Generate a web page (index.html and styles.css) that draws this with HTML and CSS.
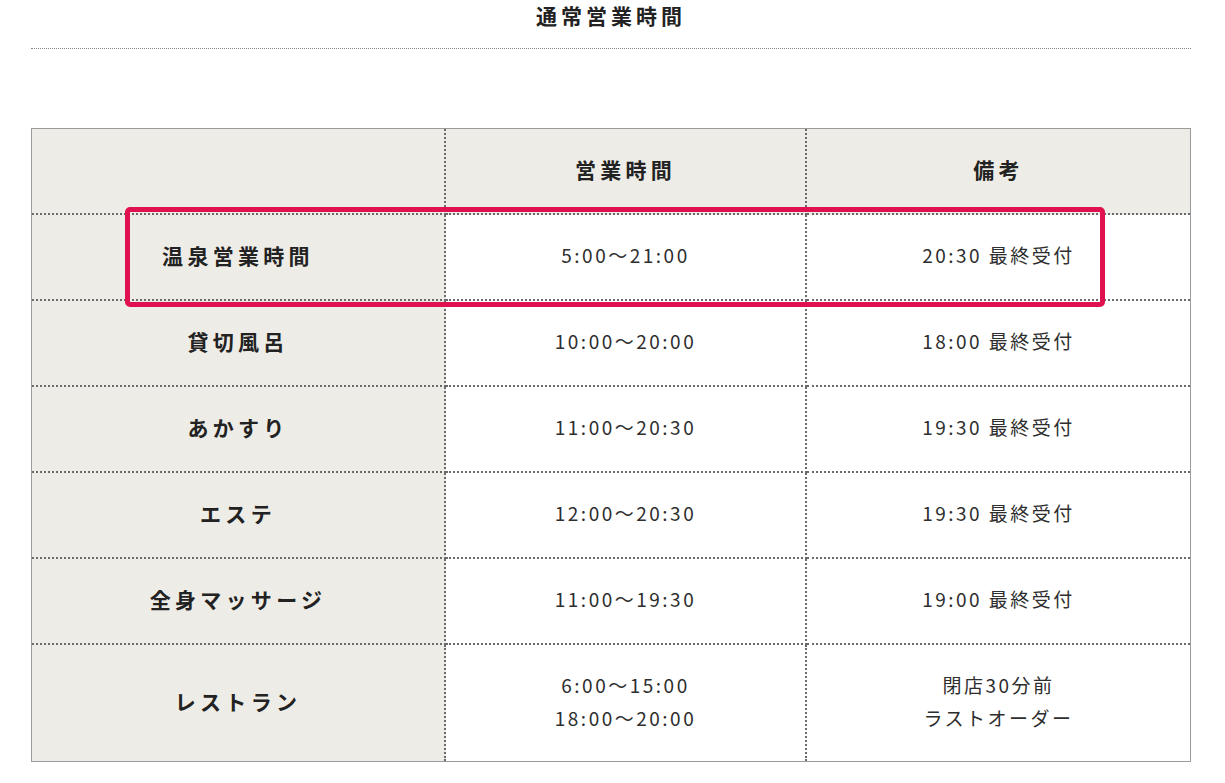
FILE: index.html
```html
<!DOCTYPE html>
<html lang="ja">
<head>
<meta charset="utf-8">
<title>通常営業時間</title>
<link rel="stylesheet" href="styles.css">
</head>
<body>
<div class="page">
  <h2 class="title">通常営業時間</h2>
  <div class="rule"></div>
  <div class="table-wrap">
    <table class="hours">
      <colgroup>
        <col class="col-label">
        <col class="col-time">
        <col class="col-note">
      </colgroup>
      <thead>
        <tr class="head-row">
          <th class="label"></th>
          <th>営業時間</th>
          <th>備考</th>
        </tr>
      </thead>
      <tbody>
        <tr>
          <th class="label">温泉営業時間</th>
          <td>5:00～21:00</td>
          <td>20:30 最終受付</td>
        </tr>
        <tr>
          <th class="label">貸切風呂</th>
          <td>10:00～20:00</td>
          <td>18:00 最終受付</td>
        </tr>
        <tr>
          <th class="label">あかすり</th>
          <td>11:00～20:30</td>
          <td>19:30 最終受付</td>
        </tr>
        <tr>
          <th class="label">エステ</th>
          <td>12:00～20:30</td>
          <td>19:30 最終受付</td>
        </tr>
        <tr>
          <th class="label">全身マッサージ</th>
          <td>11:00～19:30</td>
          <td>19:00 最終受付</td>
        </tr>
        <tr class="tall">
          <th class="label">レストラン</th>
          <td>6:00～15:00<br>18:00～20:00</td>
          <td>閉店30分前<br>ラストオーダー</td>
        </tr>
      </tbody>
    </table>
    <div class="highlight"></div>
  </div>
</div>
</body>
</html>
```

FILE: styles.css
```css
html, body {
  margin: 0;
  padding: 0;
  background: #ffffff;
}

body {
  font-family: "Noto Sans CJK JP", "Noto Sans", sans-serif;
  color: #333333;
}

.page {
  width: 1160px;
  margin-left: 31px;
}

.title {
  margin: 0;
  padding-top: 1px;
  text-align: center;
  font-size: 21px;
  font-weight: 700;
  letter-spacing: 4px;
  line-height: 28px;
  color: #222222;
}

.rule {
  margin-top: 19px;
  border-top: 1px dotted #888888;
}

.table-wrap {
  position: relative;
  margin-top: 79px;
}

.hours {
  width: 1160px;
  border-collapse: separate;
  border-spacing: 0;
  table-layout: fixed;
  border: 1px solid #9a9a9a;
}

.col-label {
  width: 414px;
}

.col-time {
  width: 361px;
}

.hours th,
.hours td {
  border: 0;
  border-right: 2px dotted #6a6a6a;
  border-bottom: 2px dotted #6a6a6a;
  text-align: center;
  vertical-align: middle;
  padding: 0 0 5px 0;
}

.hours tr > :last-child {
  border-right: 0;
}

.hours tbody tr:last-child > * {
  border-bottom: 0;
}

.hours th {
  font-size: 21px;
  font-weight: 700;
  letter-spacing: 4.3px;
  color: #222222;
}

.hours td {
  font-size: 19px;
  font-weight: 400;
  letter-spacing: 2.5px;
  line-height: 33px;
  background: #ffffff;
  color: #2e2e2e;
}

.hours .label {
  background: #eeece6;
}

.head-row th {
  background: #eeece6;
  height: 79px;
}

.hours tbody tr {
  height: 86px;
}

.hours tbody tr.tall {
  height: 116px;
}

.highlight {
  position: absolute;
  left: 94px;
  top: 79px;
  width: 970px;
  height: 90px;
  border: 5px solid #e0114f;
  border-radius: 5px;
  pointer-events: none;
}
```
